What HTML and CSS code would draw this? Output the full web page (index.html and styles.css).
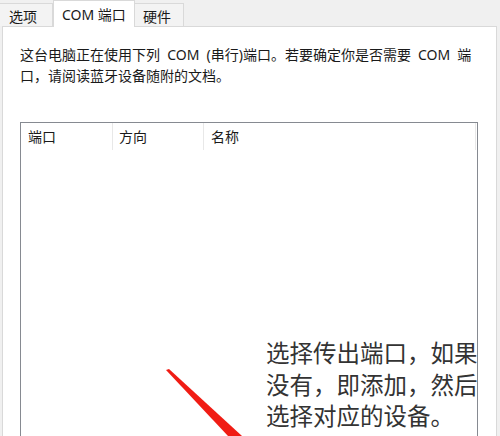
FILE: index.html
```html
<!DOCTYPE html>
<html lang="zh-CN">
  <head>
    <meta charset="UTF-8" />
    <meta name="viewport" content="width=device-width, initial-scale=1.0" />
    <title>COM 端口</title>
    <link rel="stylesheet" href="styles.css">
  </head>
  <body>
    <div class="tabs">
      <div class="tab">选项</div>
      <div class="tab active">COM 端口</div>
      <div class="tab">硬件</div>
    </div>
    <div class="panel">
      <p class="intro">
        这台电脑正在使用下列 COM (串行)端口。若要确定你是否需要 COM 端<br />
        口，请阅读蓝牙设备随附的文档。
      </p>
      <div class="list">
        <div class="list-head">
          <div class="col col-port">端口</div>
          <div class="col col-dir">方向</div>
          <div class="col col-name">名称</div>
        </div>
      </div>
    </div>

    <!-- 标注 -->
    <div class="note">
      选择传出端口，如果<br />
      没有，即添加，然后<br />
      选择对应的设备。
    </div>
    <svg class="arrow" width="90" height="80" viewBox="0 0 90 80">
      <polygon points="0,1 3,0 76,67 62,67" fill="#f01c14" />
    </svg>
  </body>
</html>
```

FILE: styles.css
```css
body {
  margin: 0;
  width: 500px;
  height: 436px;
  overflow: hidden;
  background-color: #f0f0f0;
  font-family: "Noto Sans", "Noto Sans CJK SC", sans-serif;
  color: #1a1a1a;
  position: relative;
}

.tabs {
  display: flex;
  align-items: flex-end;
  height: 26px;
  margin-left: -1px;
}

.tab {
  height: 23px;
  padding: 0 8px;
  font-size: 14px;
  line-height: 25px;
  background-color: #f3f3f3;
  border: 1px solid #d9d9d9;
  border-bottom: none;
  box-sizing: border-box;
}

.tab:first-child {
  width: 54px;
  padding-left: 9px;
}

.tab.active {
  height: 27px;
  width: 82px;
  padding: 0 0 0 8px;
  margin-bottom: -1px;
  background-color: #fff;
  position: relative;
  z-index: 1;
  line-height: 28px;
}

.tab:last-child {
  width: 49px;
  border-left: none;
}

.panel {
  margin-left: 2px;
  width: 495px;
  height: 420px;
  box-sizing: border-box;
  background-color: #fff;
  border: 1px solid #d9d9d9;
  padding: 17px 20px 0 17px;
}

.intro {
  margin: 0;
  font-size: 14px;
  line-height: 21px;
  word-spacing: 3.5px;
  white-space: nowrap;
}

.list {
  margin-top: 36px;
  width: 458px;
  height: 330px;
  box-sizing: border-box;
  border: 1px solid #868a91;
  border-bottom: none;
}

.list-head {
  display: flex;
  height: 27px;
}

.col {
  font-size: 14px;
  line-height: 28px;
  padding-left: 7px;
  box-sizing: border-box;
  border-right: 1px solid #e8e8e8;
}

.col-port {
  width: 92px;
}

.col-dir {
  width: 91px;
  padding-left: 6px;
}

.col-name {
  flex: 1;
  margin-right: 1px;
}

.note {
  position: absolute;
  left: 266px;
  top: 338px;
  font-size: 23.5px;
  line-height: 31.5px;
  color: #333;
  white-space: nowrap;
}

.arrow {
  position: absolute;
  left: 166px;
  top: 369px;
}
```
